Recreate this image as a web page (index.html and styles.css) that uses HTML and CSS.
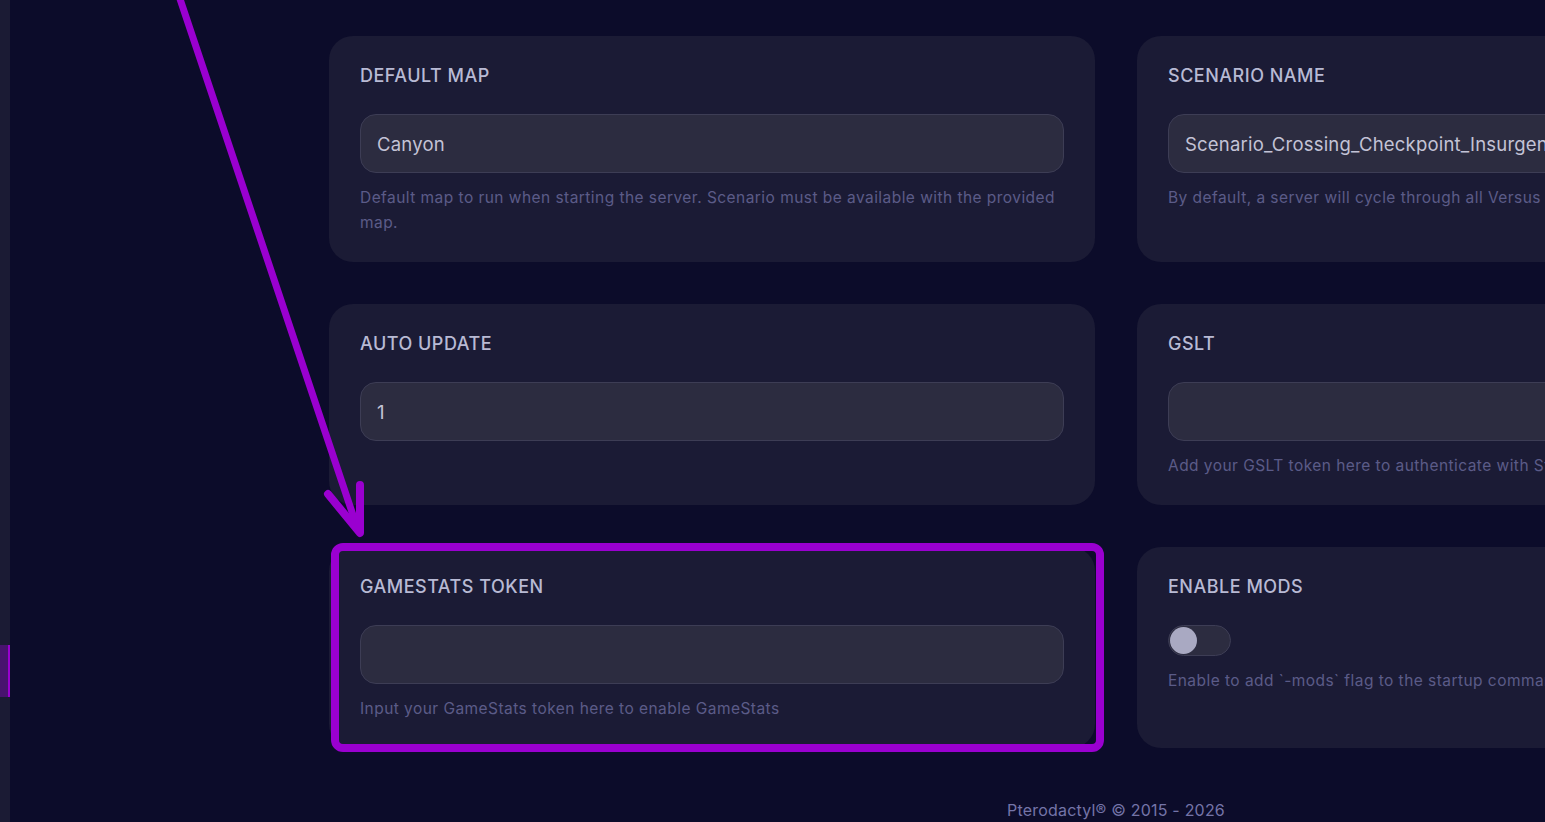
FILE: index.html
```html
<!DOCTYPE html>
<html lang="en">
<head>
<meta charset="utf-8">
<title>Startup</title>
<link rel="stylesheet" href="styles.css">
</head>
<body>
<div class="app">
  <aside class="sidebar">
    <div class="nav-active"></div>
  </aside>
  <main class="main">
    <div class="grid">
      <section class="card">
        <h3 class="card-title">Default Map</h3>
        <div class="input">Canyon</div>
        <p class="help">Default map to run when starting the server. Scenario must be available with the provided map.</p>
      </section>
      <section class="card">
        <h3 class="card-title">Scenario Name</h3>
        <div class="input">Scenario_Crossing_Checkpoint_Insurgents</div>
        <p class="help">By default, a server will cycle through all Versus scenarios on the map.</p>
      </section>
      <section class="card">
        <h3 class="card-title">Auto Update</h3>
        <div class="input">1</div>
      </section>
      <section class="card">
        <h3 class="card-title">GSLT</h3>
        <div class="input"></div>
        <p class="help">Add your GSLT token here to authenticate with Steam.</p>
      </section>
      <section class="card">
        <h3 class="card-title">GameStats Token</h3>
        <div class="input"></div>
        <p class="help">Input your GameStats token here to enable GameStats</p>
      </section>
      <section class="card">
        <h3 class="card-title">Enable Mods</h3>
        <div class="toggle"><span class="knob"></span></div>
        <p class="help">Enable to add `-mods` flag to the startup command.</p>
      </section>
    </div>
    <footer class="footer">Pterodactyl® © 2015 - 2026</footer>
  </main>
</div>
<svg class="annotation" width="1545" height="822" viewBox="0 0 1545 822" xmlns="http://www.w3.org/2000/svg">
  <g fill="none" stroke="#9a00d0" stroke-linecap="round" stroke-linejoin="round">
    <path d="M177 -10 L358 530" stroke-width="7"/>
    <path d="M328 494 L360 533 L360 485" stroke-width="8"/>
    <rect x="335" y="547" width="765" height="201" rx="8" stroke-width="8"/>
  </g>
</svg>
</body>
</html>
```
FILE: styles.css
```css
html, body {
  margin: 0;
  padding: 0;
  width: 1545px;
  height: 822px;
  overflow: hidden;
  background: #0c0c2a;
  font-family: Inter, "Noto Sans", sans-serif;
}

.app {
  display: flex;
  height: 822px;
}

.sidebar {
  width: 10px;
  flex: 0 0 10px;
  background: #1b1b34;
  display: flex;
  flex-direction: column;
}

.nav-active {
  margin-top: 645px;
  height: 52px;
  background: #48136e;
  border-right: 2px solid #9a00d0;
  box-sizing: border-box;
}

.main {
  flex: 0 0 auto;
  padding: 36px 0 0 319px;
}

.grid {
  display: grid;
  grid-template-columns: 766px 766px;
  gap: 42px;
}

.card {
  background: #1b1b35;
  border-radius: 24px;
  padding: 26px 31px 27px;
}

.card-title {
  margin: 0 0 24px;
  font-size: 18px;
  line-height: 28px;
  font-weight: 500;
  text-transform: uppercase;
  color: #b8bad4;
  letter-spacing: 0.5px;
}

.input {
  box-sizing: border-box;
  height: 59px;
  background: #2c2c40;
  border: 1px solid #3d3d55;
  border-radius: 16px;
  padding: 0 16px;
  display: flex;
  align-items: center;
  font-size: 18.5px;
  letter-spacing: 0.2px;
  color: #c3c3d6;
  white-space: nowrap;
  overflow: hidden;
}

.help {
  margin: 12px 0 0;
  font-size: 15.5px;
  line-height: 25px;
  color: #5b5b88;
  letter-spacing: 0.45px;
}

.toggle {
  box-sizing: border-box;
  width: 63px;
  height: 31px;
  border-radius: 16px;
  background: #2c2c40;
  border: 1px solid #3d3d55;
  display: flex;
  align-items: center;
  padding-left: 1px;
}

.knob {
  width: 27px;
  height: 27px;
  border-radius: 50%;
  background: #a9a9c2;
}

.footer {
  margin-top: 50px;
  text-align: center;
  font-size: 16px;
  line-height: 24px;
  color: #7474a8;
  letter-spacing: 0.2px;
}

.annotation {
  position: absolute;
  left: 0;
  top: 0;
  pointer-events: none;
}
```
